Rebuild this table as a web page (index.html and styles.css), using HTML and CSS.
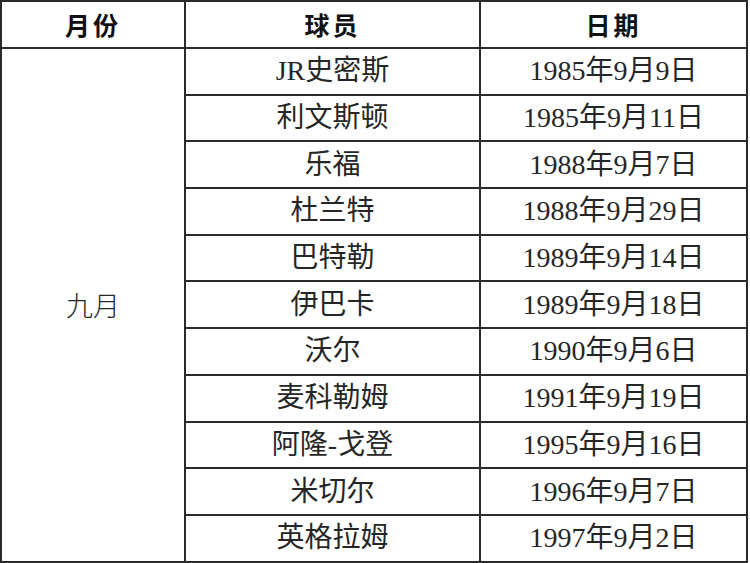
FILE: index.html
```html
<!DOCTYPE html>
<html lang="zh">
<head>
<meta charset="utf-8">
<link rel="stylesheet" href="styles.css">
</head>
<body>
<table class="roster">
  <colgroup>
    <col class="c-month">
    <col class="c-player">
    <col class="c-date">
  </colgroup>
  <thead>
    <tr class="head-row">
      <th>月份</th>
      <th>球员</th>
      <th>日期</th>
    </tr>
  </thead>
  <tbody>
    <tr><td class="month" rowspan="11">九月</td><td>JR史密斯</td><td>1985年9月9日</td></tr>
    <tr><td>利文斯顿</td><td>1985年9月11日</td></tr>
    <tr><td>乐福</td><td>1988年9月7日</td></tr>
    <tr><td>杜兰特</td><td>1988年9月29日</td></tr>
    <tr><td>巴特勒</td><td>1989年9月14日</td></tr>
    <tr><td>伊巴卡</td><td>1989年9月18日</td></tr>
    <tr><td>沃尔</td><td>1990年9月6日</td></tr>
    <tr><td>麦科勒姆</td><td>1991年9月19日</td></tr>
    <tr><td>阿隆-戈登</td><td>1995年9月16日</td></tr>
    <tr><td>米切尔</td><td>1996年9月7日</td></tr>
    <tr><td>英格拉姆</td><td>1997年9月2日</td></tr>
  </tbody>
</table>
</body>
</html>
```
FILE: styles.css
```css
html, body {
  margin: 0;
  padding: 0;
  background: #ffffff;
}

.roster {
  border-collapse: separate;
  border-spacing: 0;
  table-layout: fixed;
  width: 748px;
  border-top: 2px solid #2b2b2b;
  border-left: 2px solid #2b2b2b;
  font-family: "Liberation Serif", "Noto Sans CJK SC", serif;
  color: #262626;
}

.c-month { width: 184px; }
.c-player { width: 295px; }
.c-date { width: 267px; }

.roster th,
.roster td {
  border-right: 2px solid #2b2b2b;
  border-bottom: 2px solid #2b2b2b;
  padding: 0;
  text-align: center;
  vertical-align: middle;
  font-size: 28px;
  font-weight: 400;
  line-height: 1;
  box-sizing: border-box;
}

.roster .head-row th {
  height: 47px;
  font-family: "Noto Sans CJK SC", sans-serif;
  font-weight: 700;
  font-size: 25px;
  letter-spacing: 3px;
  color: #111111;
}

.roster tbody td {
  height: 46.7px;
}

.roster .month {
  font-family: "Noto Sans CJK SC", sans-serif;
  font-weight: 300;
  font-size: 27px;
}
```
